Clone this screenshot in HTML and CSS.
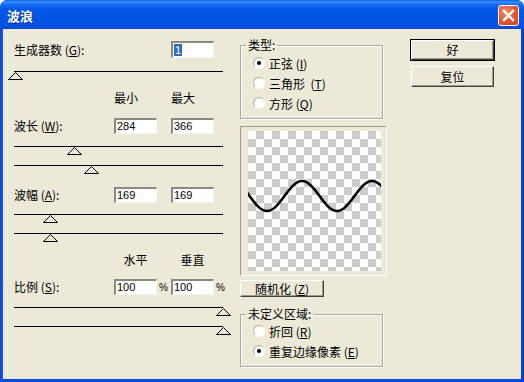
FILE: index.html
```html
<!DOCTYPE html>
<html lang="zh-CN">
<head>
    <meta charset="UTF-8">
    <title>波浪</title>
    <link rel="stylesheet" href="styles.css">
</head>
<body>
<div class="window">
    <div class="titlebar">
        <span class="title">波浪</span>
        <span class="close">
            <svg width="13" height="13" viewBox="0 0 13 13"><path d="M2 2 L11 11 M11 2 L2 11" stroke="#fff" stroke-width="2.4" stroke-linecap="square"/></svg>
        </span>
    </div>

    <div class="client">
        <!-- left: generator, wavelength, amplitude, scale -->
        <div class="col-left">
            <div class="field-row first">
                <span class="label">生成器数 (<u>G</u>):</span>
                <span class="num tall sel-wrap"><span class="sel">1</span></span>
            </div>
            <div class="slider s1">
                <div class="track"></div>
                <svg class="thumb" style="left:0px" viewBox="0 0 15 8"><polygon points="7.5,0.5 14.5,7.5 0.5,7.5"/></svg>
            </div>

            <div class="heads">
                <span class="h-min">最小</span>
                <span class="h-max">最大</span>
            </div>
            <div class="field-row r2">
                <span class="label">波长 (<u>W</u>):</span>
                <span class="num">284</span>
                <span></span>
                <span class="num">366</span>
            </div>
            <div class="pair p2">
                <div class="slider">
                    <div class="track"></div>
                    <svg class="thumb" style="left:59px" viewBox="0 0 15 8"><polygon points="7.5,0.5 14.5,7.5 0.5,7.5"/></svg>
                </div>
                <div class="slider">
                    <div class="track"></div>
                    <svg class="thumb" style="left:76px" viewBox="0 0 15 8"><polygon points="7.5,0.5 14.5,7.5 0.5,7.5"/></svg>
                </div>
            </div>

            <div class="field-row r3">
                <span class="label">波幅 (<u>A</u>):</span>
                <span class="num">169</span>
                <span></span>
                <span class="num">169</span>
            </div>
            <div class="pair p3">
                <div class="slider">
                    <div class="track"></div>
                    <svg class="thumb" style="left:35px" viewBox="0 0 15 8"><polygon points="7.5,0.5 14.5,7.5 0.5,7.5"/></svg>
                </div>
                <div class="slider">
                    <div class="track"></div>
                    <svg class="thumb" style="left:35px" viewBox="0 0 15 8"><polygon points="7.5,0.5 14.5,7.5 0.5,7.5"/></svg>
                </div>
            </div>

            <div class="heads h2">
                <span class="h-min">水平</span>
                <span class="h-max">垂直</span>
            </div>
            <div class="field-row r4">
                <span class="label">比例 (<u>S</u>):</span>
                <span class="num">100</span>
                <span class="pct">%</span>
                <span class="num">100</span>
                <span class="pct">%</span>
            </div>
            <div class="pair p4">
                <div class="slider">
                    <div class="track"></div>
                    <svg class="thumb" style="left:208px" viewBox="0 0 15 8"><polygon points="7.5,0.5 14.5,7.5 0.5,7.5"/></svg>
                </div>
                <div class="slider">
                    <div class="track"></div>
                    <svg class="thumb" style="left:208px" viewBox="0 0 15 8"><polygon points="7.5,0.5 14.5,7.5 0.5,7.5"/></svg>
                </div>
            </div>
        </div>

        <!-- middle: type, preview, undefined areas -->
        <div class="col-mid">
            <fieldset class="group g-type">
                <legend>类型:</legend>
                <div class="radio-row"><span class="radio on"></span>正弦 (<u>I</u>)</div>
                <div class="radio-row"><span class="radio"></span>三角形&nbsp;&nbsp;(<u>T</u>)</div>
                <div class="radio-row"><span class="radio"></span>方形 (<u>Q</u>)</div>
            </fieldset>

            <div class="preview">
                <div class="checker">
                    <svg width="133" height="140" viewBox="0 0 133 140">
                        <path d="M-16,50 C-3.3,50 6.3,80 19,80 C31.7,80 41.3,50 54,50 C66.7,50 76.3,80 89,80 C101.7,80 111.3,50 124,50 C136.7,50 146.3,80 159,80" fill="none" stroke="#000" stroke-width="2.6" stroke-linecap="round"/>
                    </svg>
                </div>
            </div>

            <button class="btn btn-rand">随机化 (<u>Z</u>)</button>

            <fieldset class="group g-undef">
                <legend>未定义区域:</legend>
                <div class="radio-row"><span class="radio"></span>折回 (<u>R</u>)</div>
                <div class="radio-row"><span class="radio on"></span>重复边缘像素 (<u>E</u>)</div>
            </fieldset>
        </div>

        <!-- right: buttons -->
        <div class="col-btns">
            <button class="btn btn-default">好</button>
            <button class="btn btn-reset">复位</button>
        </div>
    </div>
</div>
</body>
</html>
```

FILE: styles.css
```css
html, body {
    margin: 0;
    padding: 0;
    background: #fff;
}

body {
    font-family: "Noto Sans CJK SC", "Liberation Sans", sans-serif;
    font-size: 12px;
    color: #000;
}

u {
    text-decoration: underline;
    text-underline-offset: 1px;
}

.window {
    width: 524px;
    height: 382px;
    border-radius: 7px 7px 0 0;
    background: linear-gradient(to right, #0840cf 0, #1a5ee8 2px, #0a48d8 3px, #0a48d8 521px, #0838c8 524px);
    display: flex;
    flex-direction: column;
    overflow: hidden;
}

/* title bar */
.titlebar {
    height: 29px;
    flex: none;
    display: flex;
    align-items: center;
    justify-content: space-between;
    padding: 0 5px 0 7px;
    border-radius: 7px 7px 0 0;
    background: linear-gradient(to bottom, #0a5ee6 0%, #3a92ff 7%, #1b6ff2 14%, #0758e8 30%, #0055e5 60%, #0053e2 85%, #0a48d0 100%);
}

.title {
    color: #fff;
    font-weight: bold;
    font-size: 13px;
    text-shadow: 1px 1px 0 #0a2a8a;
    margin-top: 1px;
}

.close {
    width: 21px;
    height: 21px;
    box-sizing: border-box;
    border: 1px solid #fff;
    border-radius: 3px;
    background: radial-gradient(circle at 35% 30%, #f08868 0%, #e0552f 55%, #c8401c 100%);
    display: flex;
    align-items: center;
    justify-content: center;
    margin-top: 2px;
}

/* client area */
.client {
    flex: 1;
    margin: 0 3px 3px;
    background: #ece9d8;
    display: flex;
    align-items: flex-start;
}

.col-left {
    width: 222px;
    margin-left: 5px;
    display: flex;
    flex-direction: column;
}

.field-row {
    display: grid;
    grid-template-columns: 100px 43px 14px 43px 9px;
    align-items: center;
    height: 16px;
    padding-left: 6px;
}

.field-row.first {
    margin-top: 12px;
    height: 17px;
}

.field-row.first .num {
    grid-column: 4;
}

.label {
    white-space: nowrap;
    line-height: 16px;
}

.num {
    box-sizing: border-box;
    height: 16px;
    border-style: solid;
    border-width: 2px 1px 1px 2px;
    border-color: #8b8a82 #f6f5f0 #f6f5f0 #8b8a82;
    background: #fff;
    font-family: "Liberation Sans", Arial, sans-serif;
    font-size: 11px;
    line-height: 13px;
    padding-left: 1px;
}

.num.tall {
    height: 17px;
    line-height: 14px;
}

.sel {
    background: #316ac5;
    color: #fff;
    padding: 0 1px;
}

.pct {
    font-family: "Liberation Sans", Arial, sans-serif;
    font-size: 10px;
    padding-left: 2px;
}

.slider {
    position: relative;
    height: 19px;
}

.slider.s1 {
    height: 8px;
    margin-top: 13px;
}

.track {
    margin-left: 6px;
    width: 209px;
    border-top: 1px solid #000;
}

.thumb {
    position: absolute;
    top: 1px;
    width: 15px;
    height: 8px;
}

.thumb polygon {
    fill: #ece9d8;
    stroke: #000;
    stroke-width: 1;
}

.heads {
    display: grid;
    grid-template-columns: 100px 43px 14px 43px;
    padding-left: 6px;
    height: 14px;
    line-height: 14px;
    margin-top: 12px;
}

.heads .h-min { grid-column: 2; }
.heads .h-max { grid-column: 4; }

.heads.h2 {
    margin-top: 1px;
}

.heads.h2 span {
    text-align: center;
}

.r2 { margin-top: 13px; }
.p2 { margin-top: 12px; }
.r3 { margin-top: 3px; }
.p3 { margin-top: 11px; }
.r4 { margin-top: 12px; }
.p4 { margin-top: 12px; }

/* middle column */
.col-mid {
    width: 147px;
    margin-left: 10px;
    display: flex;
    flex-direction: column;
    align-items: flex-start;
}

.group {
    margin: 0;
    width: 143px;
    box-sizing: border-box;
    border: 1px solid #aca899;
    box-shadow: inset 1px 1px 0 #fff, 1px 1px 0 #fff;
    padding: 1px 0 5px 12px;
}

.group legend {
    padding: 0 2px;
    margin-left: -7px;
    line-height: 14px;
}

.g-type {
    margin-top: 9px;
}

.radio-row {
    height: 20px;
    display: flex;
    align-items: center;
    white-space: nowrap;
}

.radio {
    width: 12px;
    height: 12px;
    box-sizing: border-box;
    border-radius: 50%;
    border: 1px solid;
    border-color: #b9b6aa #fff #fff #b9b6aa;
    background: radial-gradient(circle at 60% 60%, #fff 45%, #e4e2d8 100%);
    margin-right: 4px;
    display: flex;
    align-items: center;
    justify-content: center;
}

.radio.on::after {
    content: "";
    width: 4px;
    height: 4px;
    border-radius: 50%;
    background: #000;
}

.preview {
    margin-top: 7px;
    width: 147px;
    height: 150px;
    box-sizing: border-box;
    border: 1px solid;
    border-color: #9d9b90 #fff #fff #9d9b90;
    padding: 4px 0 0 7px;
}

.checker {
    width: 133px;
    height: 140px;
    background-color: #fff;
    background-image:
        linear-gradient(45deg, #cccccc 25%, transparent 25%, transparent 75%, #cccccc 75%),
        linear-gradient(45deg, #cccccc 25%, transparent 25%, transparent 75%, #cccccc 75%);
    background-size: 16px 16px;
    background-position: 0 0, 8px 8px;
}

.checker svg {
    display: block;
}

.btn {
    font-family: "Noto Sans CJK SC", "Liberation Sans", sans-serif;
    font-size: 12px;
    color: #000;
    background: #ece9d8;
    box-sizing: border-box;
    border: 1px solid;
    border-color: #fff #404040 #404040 #fff;
    box-shadow: inset -1px -1px 0 #9d9b90;
    padding: 0;
    margin: 0;
    line-height: 14px;
}

.btn-rand {
    margin-top: 4px;
    width: 84px;
    height: 17px;
}

.g-undef {
    margin-top: 10px;
    padding-top: 0;
}

/* right buttons */
.col-btns {
    margin-left: 24px;
    width: 83px;
    display: flex;
    flex-direction: column;
}

.btn-default {
    margin-top: 11px;
    height: 20px;
    outline: 1px solid #000;
    outline-offset: 0;
    border-color: #fff #404040 #404040 #fff;
}

.btn-reset {
    margin-top: 6px;
    height: 21px;
}
```
